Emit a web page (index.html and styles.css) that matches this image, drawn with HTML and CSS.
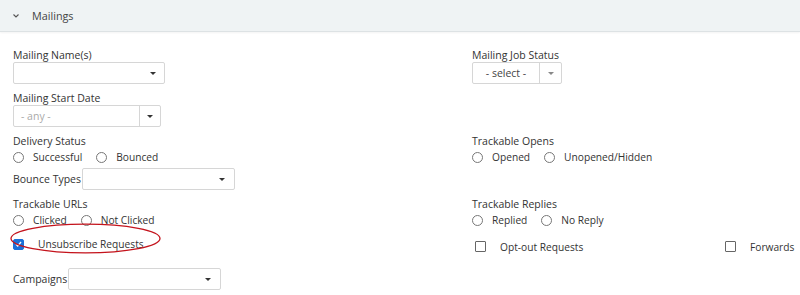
FILE: index.html
```html
<!DOCTYPE html>
<html lang="en">
<head>
    <meta charset="UTF-8">
    <title>Mailings</title>
    <link rel="stylesheet" href="styles.css">
</head>
<body>

    <div class="panel-head">
        <svg class="chev" width="6" height="4" viewBox="0 0 6 4"><path d="M0.5 0.5 L3 3 L5.5 0.5" fill="none" stroke="#555" stroke-width="1.1"/></svg>
        <span>Mailings</span>
    </div>

    <div class="form">
        <!-- Mailing name / job status -->
        <div class="row">
            <div class="col-l">
                <label class="lbl">Mailing Name(s)</label>
                <div class="select sel-name"><span class="val"></span><span class="caret"></span></div>
            </div>
            <div class="col-r">
                <label class="lbl">Mailing Job Status</label>
                <div class="select sel-job">
                    <span class="val center">- select -</span>
                    <span class="btn"><span class="caret light"></span></span>
                </div>
            </div>
        </div>

        <div class="row gap7">
            <div class="col-l">
                <label class="lbl">Mailing Start Date</label>
                <div class="select sel-date">
                    <span class="val muted">- any -</span>
                    <span class="btn"><span class="caret"></span></span>
                </div>
            </div>
        </div>

        <div class="row gap7">
            <div class="col-l">
                <label class="lbl">Delivery Status</label>
                <div class="opts">
                    <span class="opt"><span class="radio"></span>Successful</span>
                    <span class="opt"><span class="radio"></span>Bounced</span>
                </div>
            </div>
            <div class="col-r">
                <label class="lbl">Trackable Opens</label>
                <div class="opts">
                    <span class="opt"><span class="radio"></span>Opened</span>
                    <span class="opt"><span class="radio"></span>Unopened/Hidden</span>
                </div>
            </div>
        </div>

        <div class="row gap2">
            <div class="col-l inline">
                <label class="lbl">Bounce Types</label>
                <div class="select sel-wide"><span class="val"></span><span class="caret"></span></div>
            </div>
        </div>

        <div class="row gap7">
            <div class="col-l">
                <label class="lbl">Trackable URLs</label>
                <div class="opts">
                    <span class="opt"><span class="radio"></span>Clicked</span>
                    <span class="opt"><span class="radio"></span>Not Clicked</span>
                </div>
            </div>
            <div class="col-r">
                <label class="lbl">Trackable Replies</label>
                <div class="opts">
                    <span class="opt"><span class="radio"></span>Replied</span>
                    <span class="opt"><span class="radio"></span>No Reply</span>
                </div>
            </div>
        </div>

        <div class="row checks">
            <div class="col-l">
                <span class="chk-item marked">
                    <span class="chk on">
                        <svg width="10" height="10" viewBox="0 0 10 10"><path d="M2.2 5.2 L4.2 7.2 L7.8 2.8" fill="none" stroke="#fff" stroke-width="1.4"/></svg>
                    </span>
                    Unsubscribe Requests
                    <svg class="circle-mark" width="151" height="31" viewBox="0 0 151 31"><ellipse cx="75.5" cy="15.5" rx="74.5" ry="14.3" fill="none" stroke="#c4131c" stroke-width="1.3"/></svg>
                </span>
            </div>
            <div class="col-r check-cols">
                <span class="chk-item down"><span class="chk"></span>Opt-out Requests</span>
                <span class="chk-item down"><span class="chk"></span>Forwards</span>
            </div>
        </div>

        <div class="row gap12">
            <div class="col-l inline">
                <label class="lbl">Campaigns</label>
                <div class="select sel-wide"><span class="val"></span><span class="caret"></span></div>
            </div>
        </div>
    </div>

</body>
</html>
```

FILE: styles.css
```css
body {
    margin: 0;
    font-family: "Open Sans", "DejaVu Sans", sans-serif;
    font-size: 10.5px;
    color: #333;
    background-color: #fff;
    overflow: hidden;
}
.panel-head {
    height: 31px;
    background-color: #eff3f4;
    border-bottom: 1px solid #dde2e4;
    box-shadow: 0 1px 2px rgba(0, 0, 0, 0.05);
    display: flex;
    align-items: center;
    padding-left: 13px;
    color: #444;
    font-size: 10.8px;
}
.chev {
    margin-right: 13px;
    margin-top: 1px;
}
.form {
    padding: 16px 0 0 13px;
}
.row {
    display: flex;
}
.gap2 { margin-top: 2px; }
.gap7 { margin-top: 7px; }
.gap12 { margin-top: 12px; }
.col-l {
    width: 459px;
    flex-shrink: 0;
}
.col-r {
    flex: 1;
    min-width: 0;
}
.lbl {
    display: block;
    line-height: 14px;
    color: #333;
}
.inline {
    display: flex;
    align-items: center;
}
.inline .lbl {
    margin-right: 1px;
}
.select {
    height: 22px;
    box-sizing: border-box;
    border: 1px solid #d6d6d6;
    border-radius: 2px;
    display: flex;
    align-items: center;
    background-color: #fff;
}
.select .val {
    flex: 1;
    padding-left: 7px;
    color: #444;
}
.select .val.center {
    text-align: center;
    padding-left: 0;
}
.select .muted {
    color: #aaa;
}
.select .btn {
    height: 100%;
    border-left: 1px solid #d6d6d6;
    display: flex;
    align-items: center;
    justify-content: center;
}
.caret {
    width: 0;
    height: 0;
    border-left: 3px solid transparent;
    border-right: 3px solid transparent;
    border-top: 3px solid #333;
}
.caret.light {
    border-top-color: #888;
}
.sel-name {
    width: 152px;
}
.sel-name .caret {
    margin-right: 8px;
}
.sel-job {
    width: 90px;
}
.sel-job .btn {
    width: 21px;
}
.sel-date {
    width: 148px;
}
.sel-date .btn {
    width: 20px;
}
.sel-wide {
    width: 153px;
}
.sel-wide .caret {
    margin-right: 9px;
}
.opts {
    display: flex;
    align-items: center;
    height: 18px;
    gap: 14px;
    font-size: 10.2px;
}
.opt {
    display: flex;
    align-items: center;
    gap: 9px;
}
.radio {
    width: 11px;
    height: 11px;
    box-sizing: border-box;
    border: 1px solid #777;
    border-radius: 50%;
}
.checks {
    margin-top: 3px;
    height: 24px;
    align-items: center;
}
.check-cols {
    display: flex;
    align-items: center;
}
.check-cols .chk-item {
    width: 250px;
    flex-shrink: 0;
    margin-left: 3px;
}
.check-cols .chk-item + .chk-item {
    width: auto;
    margin-left: 0;
}
.chk-item {
    position: relative;
    display: flex;
    align-items: center;
    gap: 14px;
    font-size: 10.2px;
}
.chk-item.down {
    margin-top: 5px;
}
.chk {
    width: 11px;
    height: 11px;
    box-sizing: border-box;
    border: 1px solid #666;
    border-radius: 1px;
    display: flex;
    align-items: center;
    justify-content: center;
}
.chk.on {
    background-color: #1b6fd8;
    border-color: #1b6fd8;
    border-radius: 2px;
}
.circle-mark {
    position: absolute;
    left: -3px;
    top: -14px;
}
```
